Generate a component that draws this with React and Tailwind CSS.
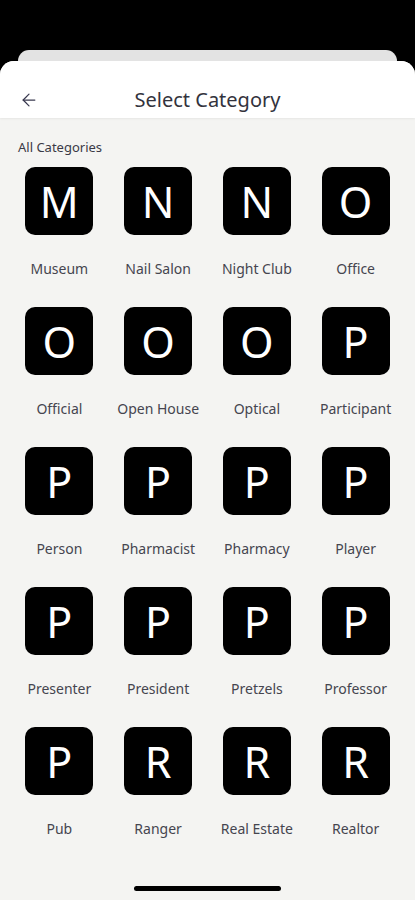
import { ArrowLeft } from "lucide-react";

const categories = [
  "Museum", "Nail Salon", "Night Club", "Office",
  "Official", "Open House", "Optical", "Participant",
  "Person", "Pharmacist", "Pharmacy", "Player",
  "Presenter", "President", "Pretzels", "Professor",
  "Pub", "Ranger", "Real Estate", "Realtor",
];

function Tile({ name }) {
  return (
    <div className="flex flex-col items-center">
      <div className="w-[68px] h-[68px] rounded-[10px] bg-black flex items-center justify-center">
        <span className="text-white text-[43px] leading-none">{name[0]}</span>
      </div>
      <p className="mt-[24px] h-[20px] leading-[20px] text-[14px] text-[#45454f] whitespace-nowrap">
        {name}
      </p>
    </div>
  );
}

export default function App() {
  return (
    <div
      className="w-[415px] h-[900px] bg-black pt-[50px] flex flex-col overflow-hidden"
      style={{ fontFamily: '"Noto Sans", "Open Sans", sans-serif' }}
    >
      <div className="mx-[18px] h-[11px] bg-[#e3e3e3] rounded-t-[12px]" />
      <div className="flex-1 flex flex-col bg-[#f4f4f2] rounded-t-[14px] overflow-hidden">
        <div className="h-[57px] bg-white grid grid-cols-[60px_1fr_60px] items-center shadow-[0_1px_2px_rgba(0,0,0,0.06)]">
          <div className="pl-[19px] pt-[20px]">
            <ArrowLeft size={20} strokeWidth={1.5} className="text-[#3a3a50]" />
          </div>
          <h1 className="text-center text-[20px] text-[#33333d] pt-[20px]">Select Category</h1>
          <div />
        </div>
        <div className="flex-1 flex flex-col">
          <p className="pl-[18px] pt-[20px] text-[13px] leading-[18px] text-[#3a3a46]">All Categories</p>
          <div className="grid grid-cols-4 px-[10px] mt-[11px] gap-y-[28px]">
            {categories.map((c) => (
              <Tile key={c} name={c} />
            ))}
          </div>
          <div className="flex-1" />
          <div className="flex justify-center pb-[9px]">
            <div className="w-[147px] h-[5px] rounded-full bg-black" />
          </div>
        </div>
      </div>
    </div>
  );
}
